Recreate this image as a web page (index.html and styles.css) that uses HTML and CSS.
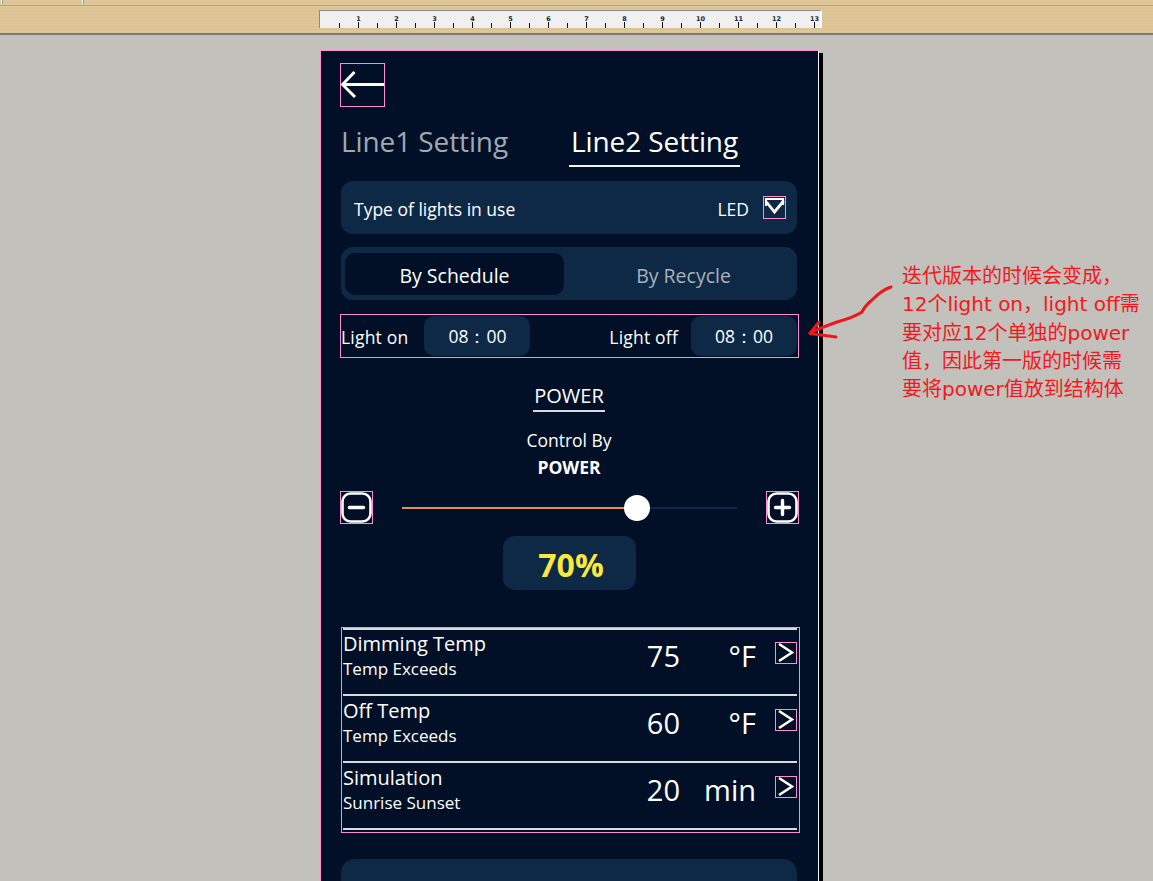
FILE: index.html
```html
<!DOCTYPE html>
<html lang="zh">
<head>
<meta charset="utf-8">
<title>Line Setting</title>
<link rel="stylesheet" href="styles.css">
</head>
<body>
<div class="toolbar">
  <div class="toolbar-top"><span class="mark mark-a"></span><span class="mark mark-b"></span></div>
  <div class="ruler-row">
    <div class="ruler">
      <svg width="500" height="17" viewBox="0 0 500 17">
        <path d="M19.5 12V17M38.5 11V17M57.5 12V17M76.5 11V17M95.5 12V17M114.5 11V17M133.5 12V17M152.5 11V17M171.5 12V17M190.5 11V17M209.5 12V17M228.5 11V17M247.5 12V17M266.5 11V17M285.5 12V17M304.5 11V17M323.5 12V17M342.5 11V17M361.5 12V17M380.5 11V17M399.5 12V17M418.5 11V17M437.5 12V17M456.5 11V17M475.5 12V17M494.5 11V17" stroke="#111" stroke-width="1"/>
        <g class="ruler-num">
          <text x="38.5" y="9.5">1</text><text x="76.5" y="9.5">2</text><text x="114.5" y="9.5">3</text><text x="152.5" y="9.5">4</text><text x="190.5" y="9.5">5</text><text x="228.5" y="9.5">6</text><text x="266.5" y="9.5">7</text><text x="304.5" y="9.5">8</text><text x="342.5" y="9.5">9</text><text x="380.5" y="9.5">10</text><text x="418.5" y="9.5">11</text><text x="456.5" y="9.5">12</text><text x="494.5" y="9.5">13</text>
        </g>
      </svg>
    </div>
  </div>
</div>

<div class="phone">
  <div class="back-btn">
    <svg width="43" height="42" viewBox="0 0 43 42"><path d="M1.5 20.5H43M13.5 8L1.5 20.5L14 33" fill="none" stroke="#fff" stroke-width="3"/></svg>
  </div>

  <div class="tabs">
    <div class="tab">Line1 Setting</div>
    <div class="tab tab-active">Line2 Setting</div>
  </div>

  <div class="card led-card">
    <span>Type of lights in use</span>
    <span class="led-right">LED
      <svg class="checkbox" width="21" height="21" viewBox="0 0 21 21"><path d="M2 9V2H19V8" fill="none" stroke="#fff" stroke-width="2.2"/><path d="M2.5 5L10.5 15L19.5 4" fill="none" stroke="#fff" stroke-width="2.8"/></svg>
    </span>
  </div>

  <div class="card toggle">
    <div class="seg seg-on">By Schedule</div>
    <div class="seg">By Recycle</div>
  </div>

  <div class="light-row">
    <span>Light on</span>
    <span class="time">08：00</span>
    <span class="light-off">Light off</span>
    <span class="time">08：00</span>
  </div>

  <div class="power-title">POWER</div>
  <div class="control-by">Control By<br><b>POWER</b></div>

  <div class="slider-row">
    <div class="step-btn">
      <svg width="31" height="31" viewBox="0 0 31 31"><rect x="1.5" y="1.5" width="28" height="28" rx="8" fill="none" stroke="#fff" stroke-width="2.6"/><path d="M8.5 15.5H22.5" stroke="#fff" stroke-width="3.4" stroke-linecap="round"/></svg>
    </div>
    <div class="track">
      <div class="track-fill" style="width:70%"></div>
      <div class="thumb" style="left:70%"></div>
    </div>
    <div class="step-btn">
      <svg width="31" height="31" viewBox="0 0 31 31"><rect x="1.5" y="1.5" width="28" height="28" rx="8" fill="none" stroke="#fff" stroke-width="2.6"/><path d="M8.5 15.5H22.5M15.5 8.5V22.5" stroke="#fff" stroke-width="3.4" stroke-linecap="round"/></svg>
    </div>
  </div>

  <div class="percent">70%</div>

  <div class="list">
    <div class="row">
      <div class="label"><div class="title">Dimming Temp</div><div class="sub">Temp Exceeds</div></div>
      <div class="value">75</div>
      <div class="unit">°F</div>
      <div class="chev"><svg width="20" height="19" viewBox="0 0 20 19"><path d="M3 1L16 9.5L3 18" fill="none" stroke="#fff" stroke-width="2.5"/></svg></div>
    </div>
    <div class="row">
      <div class="label"><div class="title">Off Temp</div><div class="sub">Temp Exceeds</div></div>
      <div class="value">60</div>
      <div class="unit">°F</div>
      <div class="chev"><svg width="20" height="19" viewBox="0 0 20 19"><path d="M3 1L16 9.5L3 18" fill="none" stroke="#fff" stroke-width="2.5"/></svg></div>
    </div>
    <div class="row">
      <div class="label"><div class="title">Simulation</div><div class="sub">Sunrise Sunset</div></div>
      <div class="value">20</div>
      <div class="unit">min</div>
      <div class="chev"><svg width="20" height="19" viewBox="0 0 20 19"><path d="M3 1L16 9.5L3 18" fill="none" stroke="#fff" stroke-width="2.5"/></svg></div>
    </div>
  </div>

  <div class="card bottom-card"></div>
</div>

<div class="note">迭代版本的时候会变成，<br>12个light on，light off需<br>要对应12个单独的power<br>值，因此第一版的时候需<br>要将power值放到结构体</div>
<svg class="note-arrow" width="100" height="65" viewBox="800 280 100 65">
  <path d="M891 287C884 289 878 294 872 300C866 305 864 308 862 312C856 316 848 319 837 322C828 325 818 329 810 333" fill="none" stroke="#f0171b" stroke-width="3" stroke-linecap="round"/>
  <path d="M819 322L810 333.5L836 337" fill="none" stroke="#f0171b" stroke-width="3" stroke-linecap="round" stroke-linejoin="round"/>
</svg>
</body>
</html>
```

FILE: styles.css
```css
* { box-sizing: border-box; }
html, body { margin: 0; padding: 0; overflow: hidden; }
body {
  width: 1153px;
  height: 881px;
  background: #c2c1bc;
  font-family: "Open Sans", "Noto Sans", sans-serif;
  color: #fff;
  position: relative;
}

/* top toolbar */
.toolbar {
  height: 35px;
  background: repeating-linear-gradient(#dec698 0 2px, #d9c192 2px 3px);
  border-bottom: 2px solid #7d7d7d;
}
.toolbar-top {
  height: 6px;
  border-bottom: 1px solid #a6a6a6;
  display: flex;
}
.mark { width: 2px; height: 4px; background: #fff; border-right: 1px solid #999; }
.mark-a { margin-left: 1px; }
.mark-b { margin-left: 79px; }
.ruler-row { padding: 4px 0 0 319px; }
.ruler {
  width: 503px;
  height: 18px;
  background: #f0f0f0;
  border-top: 1px solid #8a8a8a;
  border-left: 1px solid #8a8a8a;
  border-right: 2px solid #fdfdfd;
}
.ruler svg { display: block; }
.ruler-num text {
  font-family: "DejaVu Sans", sans-serif;
  font-size: 6.5px;
  font-weight: bold;
  fill: #1b1b3a;
  text-anchor: middle;
}

/* phone */
.phone {
  margin: 15px 0 0 320px;
  width: 499px;
  height: 900px;
  background: #011027;
  border-top: 1px solid #ff8fd0;
  border-left: 1px solid #ff8fd0;
  border-right: 1px solid #f4f4f4;
  box-shadow: 4px 3px 0 #000;
  padding: 12px 21px 0 20px;
  display: flex;
  flex-direction: column;
}
.back-btn {
  width: 45px;
  height: 44px;
  margin-left: -1px;
  border: 1px solid #ff8fd0;
}
.back-btn svg { display: block; }

.tabs {
  display: flex;
  margin-top: 16px;
}
.tab {
  font-size: 28px;
  line-height: 36px;
  padding-bottom: 6px;
  border-bottom: 2px solid transparent;
  color: #a0a8b2;
  letter-spacing: -0.1px;
}
.tab:first-child { width: 228px; }
.tab-active {
  color: #fff;
  padding: 0 2px 6px;
  border-bottom-color: #f2f2f2;
}

.card {
  background: #0e2946;
  border-radius: 12px;
}
.led-card {
  margin-top: 14px;
  height: 53px;
  padding: 2px 12px 0 13px;
  display: flex;
  align-items: center;
  justify-content: space-between;
  font-size: 17.5px;
}
.led-right {
  display: flex;
  align-items: center;
  gap: 15px;
}
.checkbox {
  display: block;
  outline: 1px solid #ff8fd0;
  margin-top: -2px;
}

.toggle {
  margin-top: 13px;
  height: 53px;
  padding: 6px 4px 5px;
  display: flex;
  gap: 10px;
}
.seg {
  flex: 1;
  display: flex;
  align-items: center;
  justify-content: center;
  font-size: 19.5px;
  color: #a9b0b9;
  border-radius: 10px;
  padding-top: 3px;
}
.seg-on {
  background: #011027;
  color: #fff;
}

.light-row {
  margin: 14px -2px 0 -1px;
  height: 44px;
  border: 1px solid #ff8fd0;
  padding: 1px 1px 1px 0;
  display: flex;
  align-items: center;
  font-size: 17.5px;
}
.light-row > span:first-child,
.light-off { padding-top: 2px; letter-spacing: 0.2px; }
.time {
  width: 106px;
  height: 40px;
  background: #0e2946;
  border-radius: 10px;
  display: flex;
  align-items: center;
  justify-content: center;
  margin-left: 16px;
  padding-top: 1px;
}
.light-off { margin-left: auto; }
.light-off + .time { margin-left: 13px; }

.power-title {
  align-self: center;
  margin-top: 25px;
  font-size: 20px;
  line-height: 26px;
  padding: 0 1px 1px;
  border-bottom: 2px solid #d7dbdf;
}
.control-by {
  margin-top: 15px;
  text-align: center;
  font-size: 17.5px;
  line-height: 27px;
}
.control-by b { font-weight: 700; font-size: 17.5px; }

.slider-row {
  margin: 10px -2px 0 -1px;
  height: 33px;
  display: flex;
  align-items: center;
  gap: 29px;
}
.step-btn {
  width: 33px;
  height: 33px;
  border: 1px solid #ff8fd0;
}
.step-btn svg { display: block; }
.track {
  flex: 1;
  height: 2px;
  background: #0e2946;
  position: relative;
}
.track-fill {
  height: 2px;
  background: #e3914c;
}
.thumb {
  position: absolute;
  top: -12px;
  width: 26px;
  height: 26px;
  margin-left: -13px;
  border-radius: 50%;
  background: #fff;
}

.percent {
  align-self: center;
  margin-top: 12px;
  width: 133px;
  height: 54px;
  background: #0e2946;
  border-radius: 12px;
  display: flex;
  align-items: center;
  justify-content: center;
  font-size: 32px;
  font-weight: 700;
  color: #fae83c;
  margin-left: 1px;
  padding: 3px 0 0 3px;
}

.list {
  margin: 37px -3px 0 0;
  border: 1px solid #ff8fd0;
  padding: 0 0 2px 1px;
}
.row {
  margin-right: 2px;
  height: 67px;
  padding-top: 2px;
  border-bottom: 2px solid #d7dbde;
  display: grid;
  grid-template-columns: 1fr auto 76px 41px;
  align-items: start;
}
.row:first-child {
  border-top: 2px solid #d7dbde;
  height: 68px;
  padding-top: 1px;
}
.label .title { font-size: 20px; line-height: 26px; }
.label .sub { font-size: 17px; line-height: 24px; }
.value, .unit {
  font-size: 29px;
  line-height: 36px;
  margin-top: 7px;
}
.unit { text-align: right; }
.chev {
  margin: 11px -2px 0 19px;
  width: 22px;
  height: 22px;
  border: 1px solid #ff8fd0;
}
.chev svg { display: block; }

.bottom-card {
  margin-top: 26px;
  height: 80px;
  border-radius: 14px;
}

/* annotation */
.note {
  position: absolute;
  left: 902px;
  top: 262px;
  font-family: "DejaVu Sans", "Noto Sans CJK SC", sans-serif;
  font-size: 20px;
  line-height: 28.3px;
  color: #f2181c;
  white-space: nowrap;
}
.note-arrow {
  position: absolute;
  left: 800px;
  top: 280px;
}
```
